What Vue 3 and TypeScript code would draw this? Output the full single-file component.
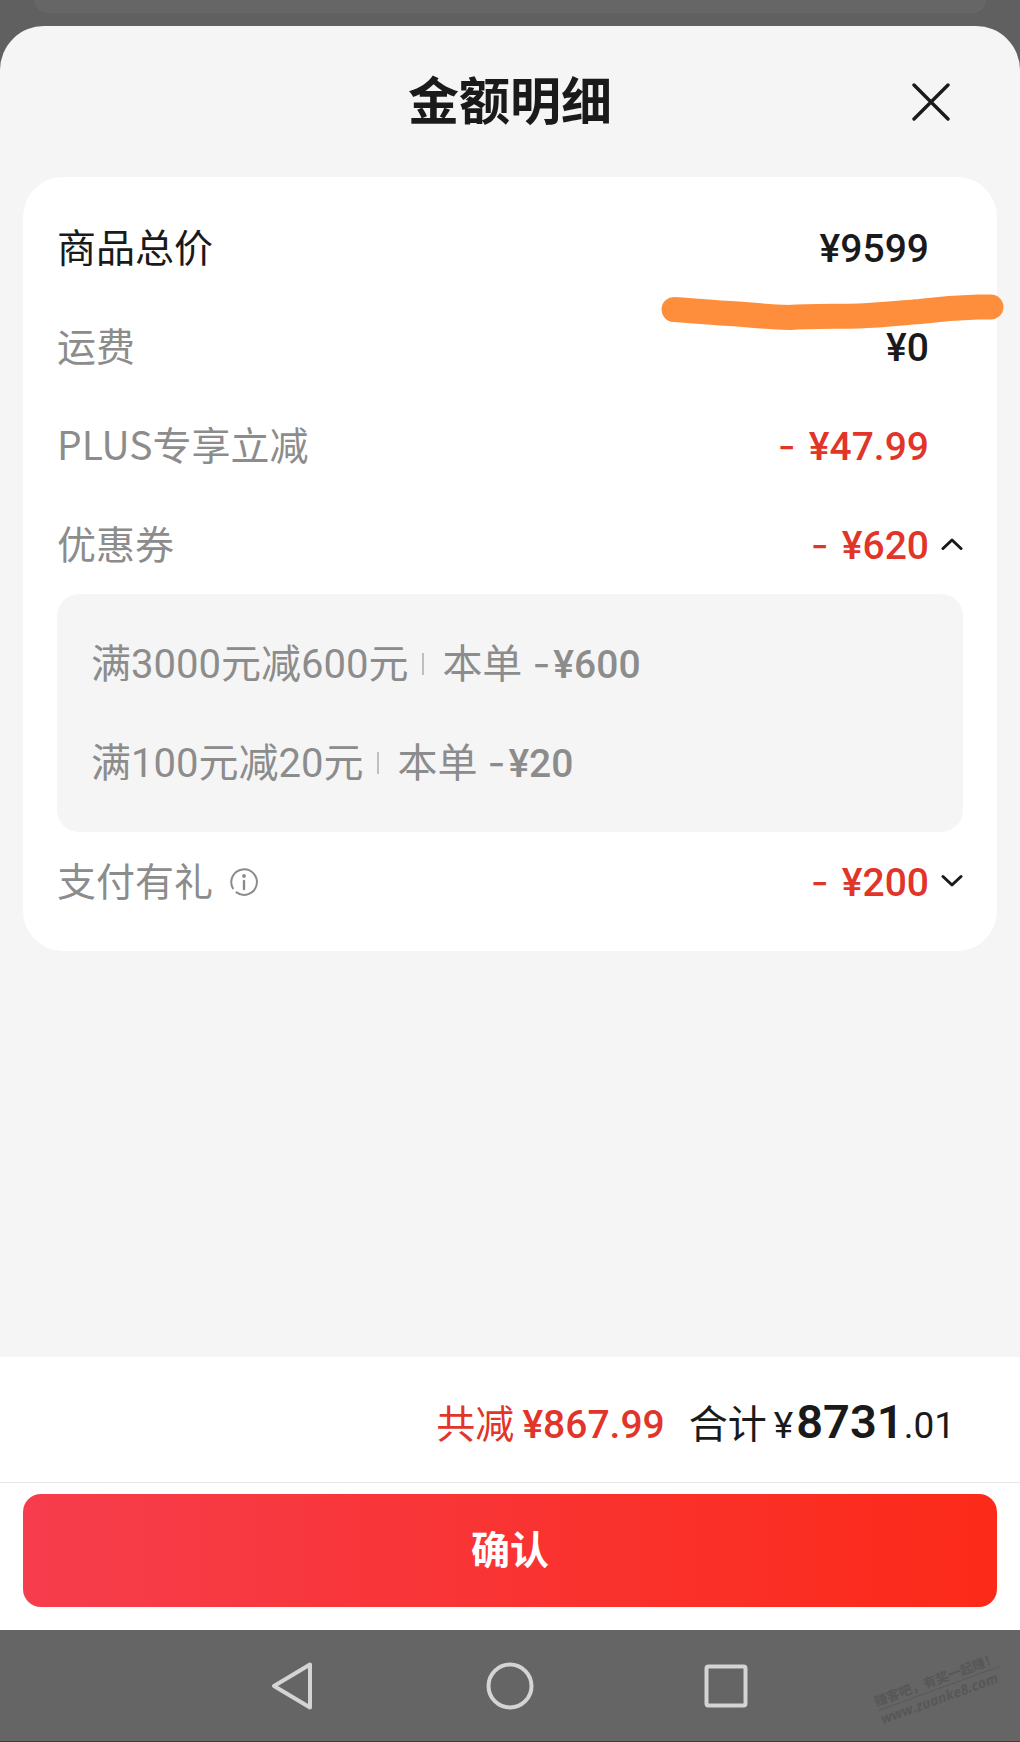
<script setup lang="ts">
import { ref } from 'vue'

interface Coupon {
  rule: string[]
  amount: string
}

const coupons: Coupon[] = [
  { rule: ['满', '3000', '元减', '600', '元'], amount: '¥600' },
  { rule: ['满', '100', '元减', '20', '元'], amount: '¥20' },
]

const couponsOpen = ref(true)
const giftOpen = ref(false)
const isNumber = (part: string) => /^\d+$/.test(part)
</script>

<template>
  <div class="page">
    <div class="behind"><div class="behind-card"></div></div>

    <main class="sheet">
      <header class="header">
        <h1>金额明细</h1>
        <button class="close" type="button" aria-label="关闭">
          <svg width="38" height="38" viewBox="0 0 38 38" fill="none" stroke="#1a1a1a" stroke-width="3.4" stroke-linecap="round">
            <path d="M2 2 36 36M36 2 2 36" />
          </svg>
        </button>
      </header>

      <section class="card">
        <div class="row dark">
          <span>商品总价</span>
          <strong class="amount">¥9599</strong>
          <svg class="marker" width="344" height="40" viewBox="0 0 344 40" fill="none" stroke="#ff8e3c" stroke-width="25" stroke-linecap="round" stroke-linejoin="round">
            <path d="M14 15.500 C35 17 58 19 78 20 C100 22 116 23 130 23.500 C145 22 174 22.500 199 22 C224 21 240 19 260 17.500 C280 15 300 13.500 318 13 L331 13" />
          </svg>
        </div>
        <div class="row">
          <span>运费</span>
          <strong class="amount dark">¥0</strong>
        </div>
        <div class="row">
          <span>PLUS专享立减</span>
          <strong class="amount red"><i>-</i>¥47.99</strong>
        </div>
        <div class="row">
          <span>优惠券</span>
          <strong class="amount red"><i>-</i>¥620</strong>
          <button class="toggle" type="button" aria-label="优惠券明细" :aria-expanded="couponsOpen" @click="couponsOpen = !couponsOpen">
            <svg :class="{ flip: couponsOpen }" width="22" height="14" viewBox="0 0 22 14" fill="none" stroke="#1a1a1a" stroke-width="3" stroke-linecap="round" stroke-linejoin="round">
              <path d="M2 2.500 11 11 20 2.500" />
            </svg>
          </button>
        </div>

        <ul v-if="couponsOpen" class="coupons">
          <li v-for="coupon in coupons" :key="coupon.amount">
            <span><span v-for="(part, i) in coupon.rule" :key="i" :class="{ num: isNumber(part) }">{{ part }}</span></span>
            <span class="bar"></span>
            <span>本单</span>
            <strong class="num"><i>-</i>{{ coupon.amount }}</strong>
          </li>
        </ul>

        <div class="row">
          <span>支付有礼</span>
          <button class="info" type="button" aria-label="支付有礼说明">
            <svg width="28" height="28" viewBox="0 0 28 28" fill="none" stroke="#8c8c8c" stroke-width="2" stroke-linecap="round">
              <path d="M2.900 20.300 A12.800 12.800 0 1 1 6.500 24.400" />
              <path d="M14 13v8" stroke-width="2.400" />
              <circle cx="14" cy="8" r="1.900" fill="#8c8c8c" stroke="none" />
            </svg>
          </button>
          <strong class="amount red"><i>-</i>¥200</strong>
          <button class="toggle" type="button" aria-label="支付有礼明细" :aria-expanded="giftOpen" @click="giftOpen = !giftOpen">
            <svg :class="{ flip: giftOpen }" width="22" height="14" viewBox="0 0 22 14" fill="none" stroke="#1a1a1a" stroke-width="3" stroke-linecap="round" stroke-linejoin="round">
              <path d="M2 2.500 11 11 20 2.500" />
            </svg>
          </button>
        </div>
      </section>
    </main>

    <footer class="footer">
      <div class="totals">
        <span class="red">共减</span>
        <strong class="saved red">¥867.99</strong>
        <span>合计</span>
        <span class="sum"><span class="yen">¥</span><b>8731</b>.01</span>
      </div>
      <div class="action">
        <button class="confirm" type="button">确认</button>
      </div>
    </footer>

    <nav class="system">
      <button type="button" aria-label="返回">
        <svg width="48" height="52" viewBox="0 0 48 52" fill="none" stroke="#d4d4d4" stroke-width="4" stroke-linejoin="round">
          <path d="M4 26 40 4.500V47.500Z" />
        </svg>
      </button>
      <button type="button" aria-label="主屏幕">
        <svg width="48" height="52" viewBox="0 0 48 52" fill="none" stroke="#d4d4d4" stroke-width="4">
          <circle cx="24" cy="26" r="21.500" />
        </svg>
      </button>
      <button type="button" aria-label="最近任务">
        <svg width="48" height="52" viewBox="0 0 48 52" fill="none" stroke="#d4d4d4" stroke-width="4">
          <rect x="4.500" y="6.500" width="39" height="39" rx="2" />
        </svg>
      </button>
      <div class="watermark">
        <span>赚客吧，有奖一起赚！</span>
        <em>www.zuanke8.com</em>
      </div>
    </nav>
  </div>
</template>

<style>
body {
  margin: 0;
}
</style>

<style scoped>
.page {
  display: flex;
  flex-direction: column;
  min-height: 100vh;
  background: #606060;
  color: #1a1a1a;
  font-family: "Noto Sans CJK SC", sans-serif;
  font-size: 39px;
}

button {
  padding: 0;
  border: 0;
  background: none;
  font: inherit;
  cursor: pointer;
}

svg {
  display: block;
}

.behind {
  height: 26px;
  padding: 0 34px;
}

.behind-card {
  height: 13px;
  border-radius: 0 0 24px 24px;
  background: #666;
}

.sheet {
  flex: 1;
  padding: 0 23px 40px;
  border-radius: 44px 44px 0 0;
  background: #f5f5f5;
}

.header {
  display: grid;
  grid-template-columns: 1fr auto 1fr;
  align-items: center;
  height: 151px;
}

.header h1 {
  grid-column: 2;
  margin: 0;
  padding-bottom: 8px;
  font-size: 51px;
  font-weight: 700;
  line-height: 72px;
}

.close {
  justify-self: end;
  margin-right: 47px;
}

.card {
  padding: 21px 34px 20px;
  border-radius: 40px;
  background: #fff;
}

.row {
  position: relative;
  display: flex;
  align-items: baseline;
  height: 99px;
  padding-right: 34px;
  color: #8c8c8c;
  line-height: 94px;
}

.dark {
  color: #1a1a1a;
}

.red {
  color: #e1352a;
}

.amount {
  margin-left: auto;
}

.amount,
.saved,
.sum,
.num {
  font-family: Roboto, "Noto Sans CJK SC", sans-serif;
}

.amount,
.saved {
  font-weight: 500;
}

i {
  font-family: Inter, sans-serif;
  font-style: normal;
  font-weight: 400;
}

.amount i {
  margin-right: 13px;
}

.toggle {
  position: absolute;
  top: 0;
  right: 0;
  display: flex;
  align-items: center;
  height: 97px;
}

.flip {
  transform: scaleY(-1);
}

.info {
  align-self: center;
  margin-left: 17px;
}

.marker {
  position: absolute;
  top: 96px;
  right: -41px;
  z-index: 1;
}

.coupons {
  margin: 0;
  padding: 20px 34px;
  border-radius: 22px;
  background: #f5f5f5;
  color: #8c8c8c;
  font-size: 40px;
  list-style: none;
}

.coupons li {
  display: flex;
  align-items: baseline;
  height: 99px;
  line-height: 94px;
}

.coupons strong {
  margin-left: 10px;
  font-size: 39px;
  font-weight: 500;
}

.coupons i {
  margin-right: 3px;
}

.bar {
  align-self: center;
  width: 2px;
  height: 22px;
  margin: 0 18px 0 14px;
  background: #bfbfbf;
}

.footer {
  background: #fff;
}

.totals {
  display: flex;
  justify-content: flex-end;
  align-items: baseline;
  height: 125px;
  padding-right: 65px;
  border-bottom: 1px solid #e6e6e6;
  line-height: 128px;
}

.saved {
  margin: 0 24px 0 8px;
}

.sum {
  margin-left: 7px;
  font-size: 37px;
}

.sum b {
  font-size: 47px;
  font-weight: 600;
}

.yen {
  margin-right: 3px;
}

.action {
  padding: 11px 23px 23px;
}

.confirm {
  width: 100%;
  height: 113px;
  padding-bottom: 7px;
  border-radius: 18px;
  background: linear-gradient(90deg, #f63d4d, #fc2a18);
  color: #fff;
  font-weight: 700;
}

.system {
  position: relative;
  display: flex;
  justify-content: center;
  align-items: center;
  gap: 168px;
  height: 111px;
  border-bottom: 1px solid #3c3c3c;
  background: #656565;
}

.watermark {
  position: absolute;
  right: 16px;
  bottom: 34px;
  display: flex;
  flex-direction: column;
  color: #575757;
  font-size: 13px;
  font-weight: 700;
  line-height: 18px;
  white-space: nowrap;
  transform: rotate(-20deg);
}

.watermark em {
  border-top: 1px solid #5a5a5a;
  font-family: "Open Sans", sans-serif;
  font-size: 14px;
}
</style>
